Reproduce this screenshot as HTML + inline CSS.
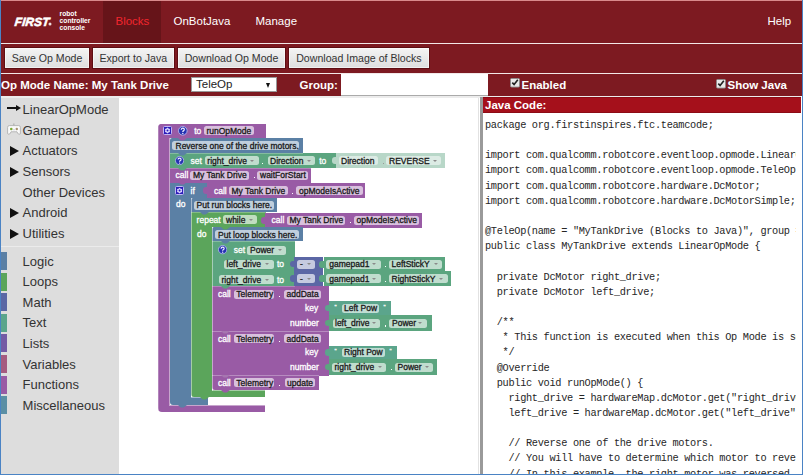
<!DOCTYPE html>
<html><head><meta charset="utf-8">
<style>
*{margin:0;padding:0;box-sizing:border-box}
html,body{width:803px;height:475px;overflow:hidden;background:#fff}
body{position:relative;font-family:"Liberation Sans",sans-serif}
.a{position:absolute}
.hdr{background:#7d1a21}
.nav{position:absolute;top:15px;font-size:11.5px;color:#fff;line-height:13px;white-space:nowrap}
.btn{position:absolute;top:47.4px;height:21.5px;background:linear-gradient(#f4f4f4,#dedede);border:1px solid #5e0e13;box-shadow:inset 0 0 0 1px rgba(255,255,255,.55);font-size:10.6px;color:#333;line-height:21.5px;text-align:center;white-space:nowrap}
.lbl{position:absolute;font-weight:bold;color:#fff;font-size:11.5px;line-height:13px;white-space:nowrap}
.side{position:absolute;left:22.6px;font-size:13px;color:#333;line-height:15px;white-space:nowrap}
.tri{position:absolute;left:10px;width:0;height:0;border-left:9.5px solid #111;border-top:5px solid transparent;border-bottom:5px solid transparent}
.cat{position:absolute;left:1px;width:6px;height:18px}
.code{position:absolute;left:2px;top:4px;font-family:"Liberation Mono",monospace;font-size:10.3px;letter-spacing:-0.32px;line-height:15.15px;color:#262626;white-space:pre}
</style><style>
.bl{position:absolute;height:10px;line-height:10px;white-space:nowrap;font-family:"Liberation Sans",sans-serif;-webkit-text-stroke:0.3px currentColor}
.q{background:#2628b4;border-radius:50%;color:#e8e0ff;text-align:center;font-weight:bold;border:0.9px solid #b9b0f0}
.g{background:#2a1cb8;border:0.9px solid #c0b5f5;border-radius:1.5px}
.g svg{display:block}
</style>
</head><body>
<!-- frame -->
<div class="a hdr" style="left:0;top:0;width:803px;height:96px"></div>
<div class="a" style="left:0;top:0;width:803px;height:1px;background:#d98a8c"></div>
<!-- blocks tab -->
<div class="a" style="left:103px;top:1px;width:58px;height:42px;background:#661419"></div>
<div class="a" style="left:0;top:43px;width:803px;height:1px;background:#f3e8e8"></div>
<div class="a" style="left:0;top:73px;width:803px;height:1px;background:#f3e8e8"></div>

<!-- logo -->
<div class="a" style="left:14px;top:15.2px;font-size:11.9px;line-height:14px;font-weight:bold;font-style:italic;color:#fff;letter-spacing:0.1px;-webkit-text-stroke:0.55px #fff;transform:skewX(-6deg);transform-origin:0 100%">FIRST</div><svg class="a" style="left:48.2px;top:21.8px" width="4" height="4" viewBox="0 0 4 4"><circle cx="2" cy="2" r="1.5" fill="#fff" fill-opacity="0.85"/></svg>
<div class="a" style="left:59.6px;top:10.3px;font-size:6.7px;font-weight:bold;color:#fff;line-height:7.1px">robot<br>controller<br>console</div>

<div class="nav" style="left:115.5px;color:#f2262e">Blocks</div>
<div class="nav" style="left:173.5px">OnBotJava</div>
<div class="nav" style="left:255.5px">Manage</div>
<div class="nav" style="left:767.5px">Help</div>

<div class="btn" style="left:3.6px;width:86.8px">Save Op Mode</div>
<div class="btn" style="left:91.6px;width:83.4px">Export to Java</div>
<div class="btn" style="left:176.7px;width:109.7px">Download Op Mode</div>
<div class="btn" style="left:287.7px;width:142.5px">Download Image of Blocks</div>

<div class="lbl" style="left:1px;top:79px">Op Mode Name: My Tank Drive</div>
<div class="a" style="left:191.3px;top:76.8px;width:85.5px;height:15.3px;background:#fff;border:1px solid #999"></div>
<div class="a" style="left:196px;top:78px;font-size:11.5px;color:#222;line-height:13px">TeleOp</div>
<div class="a" style="left:265.5px;top:82.5px;width:0;height:0;border-top:5px solid #111;border-left:2.5px solid transparent;border-right:2.5px solid transparent"></div>
<div class="lbl" style="left:299.5px;top:79px">Group:</div>
<div class="a" style="left:341px;top:74px;width:147px;height:22px;background:#fff;border-bottom:1px solid #aaa"></div>

<svg class="a" style="left:510px;top:78px" width="10" height="10" viewBox="0 0 10 10"><rect x="0.5" y="0.5" width="9" height="8.6" rx="1" fill="#e9e9e9" stroke="#8a8a8a" stroke-width="0.9"/><path d="M2.3 4.6 L4.1 6.6 L7.8 1.8" fill="none" stroke="#222" stroke-width="1.6"/></svg>
<div class="lbl" style="left:521.5px;top:79px">Enabled</div>
<svg class="a" style="left:716px;top:78.7px" width="10" height="10" viewBox="0 0 10 10"><rect x="0.5" y="0.5" width="9" height="8.6" rx="1" fill="#e9e9e9" stroke="#8a8a8a" stroke-width="0.9"/><path d="M2.3 4.6 L4.1 6.6 L7.8 1.8" fill="none" stroke="#222" stroke-width="1.6"/></svg>
<div class="lbl" style="left:727.5px;top:79px">Show Java</div>

<!-- content -->
<div class="a" style="left:0;top:96px;width:803px;height:2px;background:#ececec"></div>
<div class="a" style="left:1px;top:98px;width:118px;height:377px;background:#dddddd"></div>
<div class="a" style="left:1px;top:246px;width:118px;height:1px;background:#ebebeb"></div>

<div class="a" style="left:7px;top:107.2px;width:11px;height:1.6px;background:#111"></div>
<div class="a" style="left:15.5px;top:105px;width:0;height:0;border-left:5px solid #111;border-top:3px solid transparent;border-bottom:3px solid transparent"></div>
<svg class="a" style="left:7px;top:122.5px" width="14" height="12" viewBox="0 0 14 12"><rect x="6" y="0.5" width="1.6" height="2.5" fill="#b8b8b8"/><path d="M2.2 2.6 H11.8 Q13.4 2.6 13.4 4.4 V10 Q13.4 11.3 12.2 11.3 Q11.2 11.3 10.6 10 L10 8.8 H4 L3.4 10 Q2.8 11.3 1.8 11.3 Q0.6 11.3 0.6 10 V4.4 Q0.6 2.6 2.2 2.6 Z" fill="#fafafa" stroke="#b0b0b0" stroke-width="0.9"/><circle cx="4.3" cy="6" r="1.3" fill="#7aa832"/><circle cx="9.8" cy="6" r="1.2" fill="#a89070"/><circle cx="7" cy="6.8" r="0.8" fill="#c8c8e0"/></svg>
<div class="side" style="top:102.00px">LinearOpMode</div>
<div class="side" style="top:122.65px">Gamepad</div>
<div class="tri" style="top:146.10px"></div>
<div class="side" style="top:143.30px">Actuators</div>
<div class="tri" style="top:166.75px"></div>
<div class="side" style="top:163.95px">Sensors</div>
<div class="side" style="top:184.60px">Other Devices</div>
<div class="tri" style="top:208.05px"></div>
<div class="side" style="top:205.25px">Android</div>
<div class="tri" style="top:228.70px"></div>
<div class="side" style="top:225.90px">Utilities</div>
<div class="cat" style="top:252.00px;background:#5b80a5"></div><div class="side" style="top:253.60px">Logic</div>
<div class="cat" style="top:272.60px;background:#5ba55b"></div><div class="side" style="top:274.20px">Loops</div>
<div class="cat" style="top:293.20px;background:#5b67a5"></div><div class="side" style="top:294.80px">Math</div>
<div class="cat" style="top:313.80px;background:#5ba58c"></div><div class="side" style="top:315.40px">Text</div>
<div class="cat" style="top:334.40px;background:#745ba5"></div><div class="side" style="top:336.00px">Lists</div>
<div class="cat" style="top:355.00px;background:#a55b80"></div><div class="side" style="top:356.60px">Variables</div>
<div class="cat" style="top:375.60px;background:#995ba5"></div><div class="side" style="top:377.20px">Functions</div>
<div class="cat" style="top:396.20px;background:#5b8fa5"></div><div class="side" style="top:397.80px">Miscellaneous</div>

<!-- blocks -->
<div class="ws">
<div class="a" style="left:157.5px;top:123.5px;width:108.20px;height:14.30px;background:#995ba5;border-radius:4px 0 0 0;"></div>
<div class="a" style="left:157.5px;top:123.5px;width:12.10px;height:288.30px;background:#995ba5;border-radius:4px 0 0 4px;"></div>
<div class="a" style="left:169.6px;top:404.9px;width:95.80px;height:6.90px;background:#995ba5;"></div>
<div class="a" style="left:158.3px;top:125px;width:0.50px;height:285.00px;background:rgba(255,255,255,.25)"></div>
<div class="a g" style="left:163px;top:126.2px;width:9px;height:9px"></div><svg class="a" style="left:163px;top:126.2px" width="9" height="9" viewBox="0 0 9 9"><polygon points="4.50,1.60 5.60,2.59 7.01,3.05 6.70,4.50 7.01,5.95 5.60,6.41 4.50,7.40 3.40,6.41 1.99,5.95 2.30,4.50 1.99,3.05 3.40,2.59" fill="#ddd8ff"/><circle cx="4.5" cy="4.5" r="1.0" fill="#2a1cb8"/></svg>
<svg class="a" style="left:178.3px;top:126.4px" width="9.6" height="9.6" viewBox="0 0 10 10"><circle cx="5" cy="5" r="4.5" fill="#2432b2" stroke="#b4b8f0" stroke-width="0.9"/><path d="M3.4 3.9 Q3.4 2.3 5 2.3 Q6.6 2.3 6.6 3.7 Q6.6 4.6 5.6 5.1 Q5 5.4 5 6.2" fill="none" stroke="#f4f0ff" stroke-width="1.25"/><circle cx="5" cy="7.7" r="0.75" fill="#f4f0ff"/></svg>
<div class="bl" style="left:194.2px;top:125.65px;color:#fff;font-size:8.5px">to</div>
<div class="a" style="left:204px;top:126.30px;width:49.70px;height:9px;background:rgba(255,255,255,.62);border-radius:2.5px"></div>
<div class="bl" style="left:206.4px;top:125.85px;color:#1a1a1a;font-size:8.5px">runOpMode</div>
<div class="a" style="left:169.6px;top:138.2px;width:133.40px;height:14.70px;background:#5b80a5;border-radius:2px 0 0 0;"></div>
<div class="a" style="left:172.2px;top:140.75px;width:126.80px;height:9.5px;background:rgba(255,255,255,.62);border-radius:2.5px"></div>
<div class="bl" style="left:175.5px;top:140.55px;color:#1a1a1a;font-size:8.5px">Reverse one of the drive motors.</div>
<div class="a" style="left:169.6px;top:152.9px;width:166.40px;height:15.10px;background:#5ba57f;"></div>
<svg class="a" style="left:175.2px;top:156.2px" width="9.2" height="9.2" viewBox="0 0 10 10"><circle cx="5" cy="5" r="4.5" fill="#2432b2" stroke="#b4b8f0" stroke-width="0.9"/><path d="M3.4 3.9 Q3.4 2.3 5 2.3 Q6.6 2.3 6.6 3.7 Q6.6 4.6 5.6 5.1 Q5 5.4 5 6.2" fill="none" stroke="#f4f0ff" stroke-width="1.25"/><circle cx="5" cy="7.7" r="0.75" fill="#f4f0ff"/></svg>
<div class="bl" style="left:190.6px;top:155.55px;color:#fff;font-size:8.5px">set</div>
<div class="a" style="left:204.9px;top:156.00px;width:53.80px;height:9px;background:rgba(255,255,255,.62);border-radius:2.5px"></div>
<div class="bl" style="left:207.3px;top:155.55px;color:#1a1a1a;font-size:8.5px">right_drive</div>
<div class="a" style="left:250.20px;top:159.50px;width:0;height:0;border-top:2.5px solid #8a8a8a;border-left:2px solid transparent;border-right:2px solid transparent"></div>
<div class="a" style="left:261.7px;top:162.50px;width:1.2px;height:1.2px;background:#fff"></div>
<div class="a" style="left:267.6px;top:156.00px;width:47.40px;height:9px;background:rgba(255,255,255,.62);border-radius:2.5px"></div>
<div class="bl" style="left:270px;top:155.55px;color:#1a1a1a;font-size:8.5px">Direction</div>
<div class="a" style="left:306.50px;top:159.50px;width:0;height:0;border-top:2.5px solid #8a8a8a;border-left:2px solid transparent;border-right:2px solid transparent"></div>
<div class="bl" style="left:319.2px;top:155.55px;color:#fff;font-size:8.5px">to</div>
<div class="a" style="left:336px;top:153px;width:108.80px;height:14.80px;background:#b8d7c8;"></div>
<div class="a" style="left:331.5px;top:156.95px;width:5.5px;height:7.5px;background:#b8d7c8;border-radius:3px 0 0 3px"></div>
<div class="a" style="left:338.8px;top:156.00px;width:38.90px;height:9px;background:rgba(255,255,255,.5);border-radius:2.5px"></div>
<div class="bl" style="left:341px;top:155.55px;color:#1a1a1a;font-size:8.5px">Direction</div>
<div class="a" style="left:382.7px;top:162.50px;width:1.2px;height:1.2px;background:#999"></div>
<div class="a" style="left:386px;top:156.00px;width:55.00px;height:9px;background:rgba(255,255,255,.5);border-radius:2.5px"></div>
<div class="bl" style="left:389px;top:155.55px;color:#1a1a1a;font-size:8.5px">REVERSE</div>
<div class="a" style="left:432.50px;top:159.50px;width:0;height:0;border-top:2.5px solid #8a8a8a;border-left:2px solid transparent;border-right:2px solid transparent"></div>
<div class="a" style="left:169.6px;top:168px;width:141.40px;height:14.50px;background:#995ba5;"></div>
<div class="bl" style="left:175.6px;top:170.15px;color:#fff;font-size:8.5px">call</div>
<div class="a" style="left:190.4px;top:170.60px;width:58.20px;height:9px;background:rgba(255,255,255,.62);border-radius:2.5px"></div>
<div class="bl" style="left:193px;top:170.15px;color:#1a1a1a;font-size:8.5px">My Tank Drive</div>
<div class="a" style="left:253.6px;top:177.10px;width:1.2px;height:1.2px;background:#fff"></div>
<div class="a" style="left:257.4px;top:170.60px;width:50.60px;height:9px;background:rgba(255,255,255,.62);border-radius:2.5px"></div>
<div class="bl" style="left:260px;top:170.15px;color:#1a1a1a;font-size:8.5px">waitForStart</div>
<div class="a" style="left:169.6px;top:182.5px;width:38.00px;height:15.70px;background:#5b80a5;"></div>
<div class="a" style="left:169.6px;top:182.5px;width:21.40px;height:222.40px;background:#5b80a5;border-radius:0 0 0 3px;"></div>
<div class="a" style="left:191px;top:396.9px;width:16.80px;height:8.00px;background:#5b80a5;"></div>
<div class="a g" style="left:175px;top:186px;width:9.2px;height:9.2px"></div><svg class="a" style="left:175px;top:186px" width="9.2" height="9.2" viewBox="0 0 9 9"><polygon points="4.50,1.60 5.60,2.59 7.01,3.05 6.70,4.50 7.01,5.95 5.60,6.41 4.50,7.40 3.40,6.41 1.99,5.95 2.30,4.50 1.99,3.05 3.40,2.59" fill="#ddd8ff"/><circle cx="4.5" cy="4.5" r="1.0" fill="#2a1cb8"/></svg>
<div class="bl" style="left:190.6px;top:185.65px;color:#fff;font-size:8.5px">if</div>
<div class="bl" style="left:176px;top:198.65px;color:#fff;font-size:8.5px">do</div>
<div class="a" style="left:207.4px;top:182.5px;width:157.60px;height:15.60px;background:#995ba5;"></div>
<div class="a" style="left:202.9px;top:186.80px;width:5.5px;height:7.4px;background:#995ba5;border-radius:3px 0 0 3px"></div>
<div class="bl" style="left:214px;top:185.75px;color:#fff;font-size:8.5px">call</div>
<div class="a" style="left:229px;top:186.20px;width:59.00px;height:9px;background:rgba(255,255,255,.62);border-radius:2.5px"></div>
<div class="bl" style="left:231.5px;top:185.75px;color:#1a1a1a;font-size:8.5px">My Tank Drive</div>
<div class="a" style="left:292.3px;top:192.70px;width:1.2px;height:1.2px;background:#fff"></div>
<div class="a" style="left:296.4px;top:186.20px;width:66.60px;height:9px;background:rgba(255,255,255,.62);border-radius:2.5px"></div>
<div class="bl" style="left:299px;top:185.75px;color:#1a1a1a;font-size:8.5px">opModeIsActive</div>
<div class="a" style="left:191px;top:198.1px;width:86.40px;height:14.30px;background:#5b80a5;border-radius:2px 0 0 0;"></div>
<div class="a" style="left:194px;top:200.55px;width:80.00px;height:9.5px;background:rgba(255,255,255,.62);border-radius:2.5px"></div>
<div class="bl" style="left:196.5px;top:200.35px;color:#1a1a1a;font-size:8.5px">Put run blocks here.</div>
<div class="a" style="left:191px;top:212.2px;width:74.60px;height:15.20px;background:#5ba55b;"></div>
<div class="a" style="left:191px;top:212.2px;width:21.00px;height:184.80px;background:#5ba55b;border-radius:0 0 0 3px;"></div>
<div class="a" style="left:212px;top:390.4px;width:53.40px;height:6.60px;background:#5ba55b;"></div>
<div class="bl" style="left:196.6px;top:214.85px;color:#fff;font-size:8.5px">repeat</div>
<div class="a" style="left:223.3px;top:215.30px;width:34.10px;height:9px;background:rgba(255,255,255,.62);border-radius:2.5px"></div>
<div class="bl" style="left:226px;top:214.85px;color:#1a1a1a;font-size:8.5px">while</div>
<div class="a" style="left:248.90px;top:218.80px;width:0;height:0;border-top:2.5px solid #8a8a8a;border-left:2px solid transparent;border-right:2px solid transparent"></div>
<div class="bl" style="left:197px;top:228.65px;color:#fff;font-size:8.5px">do</div>
<div class="a" style="left:265.4px;top:213.1px;width:157.10px;height:14.50px;background:#995ba5;"></div>
<div class="a" style="left:260.9px;top:216.80px;width:5.5px;height:7px;background:#995ba5;border-radius:3px 0 0 3px"></div>
<div class="bl" style="left:271.6px;top:215.35px;color:#fff;font-size:8.5px">call</div>
<div class="a" style="left:287px;top:215.80px;width:58.40px;height:9px;background:rgba(255,255,255,.62);border-radius:2.5px"></div>
<div class="bl" style="left:289.5px;top:215.35px;color:#1a1a1a;font-size:8.5px">My Tank Drive</div>
<div class="a" style="left:349.8px;top:222.30px;width:1.2px;height:1.2px;background:#fff"></div>
<div class="a" style="left:353.8px;top:215.80px;width:65.20px;height:9px;background:rgba(255,255,255,.62);border-radius:2.5px"></div>
<div class="bl" style="left:356.5px;top:215.35px;color:#1a1a1a;font-size:8.5px">opModeIsActive</div>
<div class="a" style="left:212px;top:227.4px;width:91.00px;height:13.90px;background:#5b80a5;border-radius:2px 0 0 0;"></div>
<div class="a" style="left:215.3px;top:230.10px;width:84.20px;height:9px;background:rgba(255,255,255,.62);border-radius:2.5px"></div>
<div class="bl" style="left:218px;top:229.65px;color:#1a1a1a;font-size:8.5px">Put loop blocks here.</div>
<div class="a" style="left:212px;top:241.3px;width:82.50px;height:44.90px;background:#5ba57f;"></div>
<svg class="a" style="left:217.8px;top:245.4px" width="9.3" height="9.3" viewBox="0 0 10 10"><circle cx="5" cy="5" r="4.5" fill="#2432b2" stroke="#b4b8f0" stroke-width="0.9"/><path d="M3.4 3.9 Q3.4 2.3 5 2.3 Q6.6 2.3 6.6 3.7 Q6.6 4.6 5.6 5.1 Q5 5.4 5 6.2" fill="none" stroke="#f4f0ff" stroke-width="1.25"/><circle cx="5" cy="7.7" r="0.75" fill="#f4f0ff"/></svg>
<div class="bl" style="left:233.7px;top:245.25px;color:#fff;font-size:8.5px">set</div>
<div class="a" style="left:247.4px;top:245.70px;width:38.60px;height:9px;background:rgba(255,255,255,.62);border-radius:2.5px"></div>
<div class="bl" style="left:250px;top:245.25px;color:#1a1a1a;font-size:8.5px">Power</div>
<div class="a" style="left:277.50px;top:249.20px;width:0;height:0;border-top:2.5px solid #8a8a8a;border-left:2px solid transparent;border-right:2px solid transparent"></div>
<div class="a" style="left:224px;top:259.80px;width:49.60px;height:9px;background:rgba(255,255,255,.62);border-radius:2.5px"></div>
<div class="bl" style="left:226.5px;top:259.35px;color:#1a1a1a;font-size:8.5px">left_drive</div>
<div class="a" style="left:265.10px;top:263.30px;width:0;height:0;border-top:2.5px solid #8a8a8a;border-left:2px solid transparent;border-right:2px solid transparent"></div>
<div class="bl" style="left:277px;top:259.35px;color:#fff;font-size:8.5px">to</div>
<div class="a" style="left:219px;top:275.00px;width:54.60px;height:9px;background:rgba(255,255,255,.62);border-radius:2.5px"></div>
<div class="bl" style="left:221.5px;top:274.55px;color:#1a1a1a;font-size:8.5px">right_drive</div>
<div class="a" style="left:265.10px;top:278.50px;width:0;height:0;border-top:2.5px solid #8a8a8a;border-left:2px solid transparent;border-right:2px solid transparent"></div>
<div class="bl" style="left:277px;top:274.55px;color:#fff;font-size:8.5px">to</div>
<div class="a" style="left:294.4px;top:257.2px;width:29.00px;height:14.40px;background:#5b67a5;"></div>
<div class="a" style="left:289.9px;top:260.75px;width:5.5px;height:6.5px;background:#5b67a5;border-radius:3px 0 0 3px"></div>
<div class="a" style="left:297.2px;top:259.90px;width:17.80px;height:9px;background:rgba(255,255,255,.65);border-radius:2.5px"></div>
<div class="bl" style="left:300px;top:259.45px;color:#1a1a1a;font-size:8.5px">-</div>
<div class="a" style="left:306.50px;top:263.40px;width:0;height:0;border-top:2.5px solid #8a8a8a;border-left:2px solid transparent;border-right:2px solid transparent"></div>
<div class="a" style="left:294.4px;top:271.6px;width:29.00px;height:14.40px;background:#5b67a5;"></div>
<div class="a" style="left:289.9px;top:275.15px;width:5.5px;height:6.5px;background:#5b67a5;border-radius:3px 0 0 3px"></div>
<div class="a" style="left:297.2px;top:274.10px;width:17.80px;height:9px;background:rgba(255,255,255,.65);border-radius:2.5px"></div>
<div class="bl" style="left:300px;top:273.65px;color:#1a1a1a;font-size:8.5px">-</div>
<div class="a" style="left:306.50px;top:277.60px;width:0;height:0;border-top:2.5px solid #8a8a8a;border-left:2px solid transparent;border-right:2px solid transparent"></div>
<div class="a" style="left:323.6px;top:257.2px;width:121.80px;height:14.10px;background:#5ba57f;"></div>
<div class="a" style="left:319.1px;top:261.15px;width:5.5px;height:6.5px;background:#5ba57f;border-radius:3px 0 0 3px"></div>
<div class="a" style="left:326.2px;top:259.80px;width:54.70px;height:9px;background:rgba(255,255,255,.62);border-radius:2.5px"></div>
<div class="bl" style="left:329.2px;top:259.35px;color:#1a1a1a;font-size:8.5px">gamepad1</div>
<div class="a" style="left:372.40px;top:263.30px;width:0;height:0;border-top:2.5px solid #8a8a8a;border-left:2px solid transparent;border-right:2px solid transparent"></div>
<div class="a" style="left:385px;top:266.30px;width:1.2px;height:1.2px;background:#fff"></div>
<div class="a" style="left:389px;top:259.80px;width:53.00px;height:9px;background:rgba(255,255,255,.62);border-radius:2.5px"></div>
<div class="bl" style="left:391.5px;top:259.35px;color:#1a1a1a;font-size:8.5px">LeftStickY</div>
<div class="a" style="left:433.50px;top:263.30px;width:0;height:0;border-top:2.5px solid #8a8a8a;border-left:2px solid transparent;border-right:2px solid transparent"></div>
<div class="a" style="left:323.6px;top:271.3px;width:127.20px;height:14.80px;background:#5ba57f;"></div>
<div class="a" style="left:319.1px;top:275.45px;width:5.5px;height:6.5px;background:#5ba57f;border-radius:3px 0 0 3px"></div>
<div class="a" style="left:326.2px;top:274.20px;width:54.70px;height:9px;background:rgba(255,255,255,.62);border-radius:2.5px"></div>
<div class="bl" style="left:329.2px;top:273.75px;color:#1a1a1a;font-size:8.5px">gamepad1</div>
<div class="a" style="left:372.40px;top:277.70px;width:0;height:0;border-top:2.5px solid #8a8a8a;border-left:2px solid transparent;border-right:2px solid transparent"></div>
<div class="a" style="left:385px;top:280.70px;width:1.2px;height:1.2px;background:#fff"></div>
<div class="a" style="left:389px;top:274.20px;width:58.70px;height:9px;background:rgba(255,255,255,.62);border-radius:2.5px"></div>
<div class="bl" style="left:391.5px;top:273.75px;color:#1a1a1a;font-size:8.5px">RightStickY</div>
<div class="a" style="left:439.20px;top:277.70px;width:0;height:0;border-top:2.5px solid #8a8a8a;border-left:2px solid transparent;border-right:2px solid transparent"></div>
<div class="a" style="left:212px;top:286.2px;width:117.00px;height:44.80px;background:#995ba5;"></div>
<div class="bl" style="left:218px;top:289.05px;color:#fff;font-size:8.5px">call</div>
<div class="a" style="left:233.9px;top:289.50px;width:39.80px;height:9px;background:rgba(255,255,255,.62);border-radius:2.5px"></div>
<div class="bl" style="left:236.3px;top:289.05px;color:#1a1a1a;font-size:8.5px">Telemetry</div>
<div class="a" style="left:278.5px;top:296.00px;width:1.2px;height:1.2px;background:#fff"></div>
<div class="a" style="left:284px;top:289.50px;width:37.00px;height:9px;background:rgba(255,255,255,.62);border-radius:2.5px"></div>
<div class="bl" style="left:286.5px;top:289.05px;color:#1a1a1a;font-size:8.5px">addData</div>
<div class="bl" style="left:305px;top:303.25px;color:#fff;font-size:8.5px">key</div>
<div class="bl" style="left:290px;top:318.45px;color:#fff;font-size:8.5px">number</div>
<div class="a" style="left:329.3px;top:301.3px;width:61.50px;height:13.70px;background:#5ba58c;"></div>
<div class="a" style="left:324.8px;top:304.95px;width:5.5px;height:6.5px;background:#5ba58c;border-radius:3px 0 0 3px"></div>
<div class="bl" style="left:334.5px;top:302.12px;color:#fff;font-size:6px">"</div>
<div class="a" style="left:341.5px;top:303.70px;width:37.40px;height:9px;background:rgba(255,255,255,.62);border-radius:2.5px"></div>
<div class="bl" style="left:344px;top:303.25px;color:#1a1a1a;font-size:8.5px">Left Pow</div>
<div class="bl" style="left:383.5px;top:302.12px;color:#fff;font-size:6px">"</div>
<div class="a" style="left:329.3px;top:315.3px;width:102.50px;height:15.30px;background:#5ba57f;"></div>
<div class="a" style="left:324.8px;top:319.95px;width:5.5px;height:6.5px;background:#5ba57f;border-radius:3px 0 0 3px"></div>
<div class="a" style="left:332.5px;top:318.90px;width:47.90px;height:9px;background:rgba(255,255,255,.62);border-radius:2.5px"></div>
<div class="bl" style="left:335px;top:318.45px;color:#1a1a1a;font-size:8.5px">left_drive</div>
<div class="a" style="left:371.90px;top:322.40px;width:0;height:0;border-top:2.5px solid #8a8a8a;border-left:2px solid transparent;border-right:2px solid transparent"></div>
<div class="a" style="left:385px;top:325.40px;width:1.2px;height:1.2px;background:#fff"></div>
<div class="a" style="left:389.3px;top:318.90px;width:37.40px;height:9px;background:rgba(255,255,255,.62);border-radius:2.5px"></div>
<div class="bl" style="left:392px;top:318.45px;color:#1a1a1a;font-size:8.5px">Power</div>
<div class="a" style="left:418.20px;top:322.40px;width:0;height:0;border-top:2.5px solid #8a8a8a;border-left:2px solid transparent;border-right:2px solid transparent"></div>
<div class="a" style="left:212px;top:331px;width:117.00px;height:44.50px;background:#995ba5;"></div>
<div class="bl" style="left:218px;top:333.85px;color:#fff;font-size:8.5px">call</div>
<div class="a" style="left:233.9px;top:334.30px;width:39.80px;height:9px;background:rgba(255,255,255,.62);border-radius:2.5px"></div>
<div class="bl" style="left:236.3px;top:333.85px;color:#1a1a1a;font-size:8.5px">Telemetry</div>
<div class="a" style="left:278.5px;top:340.80px;width:1.2px;height:1.2px;background:#fff"></div>
<div class="a" style="left:284px;top:334.30px;width:37.00px;height:9px;background:rgba(255,255,255,.62);border-radius:2.5px"></div>
<div class="bl" style="left:286.5px;top:333.85px;color:#1a1a1a;font-size:8.5px">addData</div>
<div class="bl" style="left:305px;top:347.45px;color:#fff;font-size:8.5px">key</div>
<div class="bl" style="left:290px;top:362.15px;color:#fff;font-size:8.5px">number</div>
<div class="a" style="left:329.3px;top:345.7px;width:67.50px;height:13.50px;background:#5ba58c;"></div>
<div class="a" style="left:324.8px;top:349.15px;width:5.5px;height:6.5px;background:#5ba58c;border-radius:3px 0 0 3px"></div>
<div class="bl" style="left:334.5px;top:346.32px;color:#fff;font-size:6px">"</div>
<div class="a" style="left:341.5px;top:347.90px;width:43.30px;height:9px;background:rgba(255,255,255,.62);border-radius:2.5px"></div>
<div class="bl" style="left:344px;top:347.45px;color:#1a1a1a;font-size:8.5px">Right Pow</div>
<div class="bl" style="left:389.5px;top:346.32px;color:#fff;font-size:6px">"</div>
<div class="a" style="left:329.3px;top:359.3px;width:107.70px;height:15.40px;background:#5ba57f;"></div>
<div class="a" style="left:324.8px;top:363.85px;width:5.5px;height:6.5px;background:#5ba57f;border-radius:3px 0 0 3px"></div>
<div class="a" style="left:332.2px;top:362.70px;width:54.10px;height:9px;background:rgba(255,255,255,.62);border-radius:2.5px"></div>
<div class="bl" style="left:334.5px;top:362.25px;color:#1a1a1a;font-size:8.5px">right_drive</div>
<div class="a" style="left:377.80px;top:366.20px;width:0;height:0;border-top:2.5px solid #8a8a8a;border-left:2px solid transparent;border-right:2px solid transparent"></div>
<div class="a" style="left:390.5px;top:369.20px;width:1.2px;height:1.2px;background:#fff"></div>
<div class="a" style="left:395px;top:362.70px;width:38.40px;height:9px;background:rgba(255,255,255,.62);border-radius:2.5px"></div>
<div class="bl" style="left:397.5px;top:362.25px;color:#1a1a1a;font-size:8.5px">Power</div>
<div class="a" style="left:424.90px;top:366.20px;width:0;height:0;border-top:2.5px solid #8a8a8a;border-left:2px solid transparent;border-right:2px solid transparent"></div>
<div class="a" style="left:212px;top:375.6px;width:106.50px;height:14.80px;background:#995ba5;border-radius:0 0 0 3px;"></div>
<div class="bl" style="left:218px;top:377.75px;color:#fff;font-size:8.5px">call</div>
<div class="a" style="left:233.9px;top:378.20px;width:39.80px;height:9px;background:rgba(255,255,255,.62);border-radius:2.5px"></div>
<div class="bl" style="left:236.3px;top:377.75px;color:#1a1a1a;font-size:8.5px">Telemetry</div>
<div class="a" style="left:278.5px;top:384.70px;width:1.2px;height:1.2px;background:#fff"></div>
<div class="a" style="left:284.7px;top:378.20px;width:29.90px;height:9px;background:rgba(255,255,255,.62);border-radius:2.5px"></div>
<div class="bl" style="left:287px;top:377.75px;color:#1a1a1a;font-size:8.5px">update</div>
<div class="a" style="left:169.1px;top:138px;width:0.70px;height:267.50px;background:rgba(255,255,255,.45)"></div>
<div class="a" style="left:169.6px;top:404.6px;width:95.80px;height:0.80px;background:rgba(255,255,255,.45)"></div>
<div class="a" style="left:190.5px;top:198.6px;width:0.70px;height:198.80px;background:rgba(255,255,255,.45)"></div>
<div class="a" style="left:191px;top:396.6px;width:16.80px;height:0.70px;background:rgba(255,255,255,.45)"></div>
<div class="a" style="left:211.6px;top:227.4px;width:0.70px;height:163.40px;background:rgba(255,255,255,.45)"></div>
<div class="a" style="left:212px;top:390.1px;width:53.40px;height:0.70px;background:rgba(255,255,255,.45)"></div>
<div class="a" style="left:212px;top:330.6px;width:117.00px;height:0.70px;background:rgba(255,255,255,.3)"></div>
<div class="a" style="left:212px;top:375.2px;width:106.50px;height:0.70px;background:rgba(255,255,255,.3)"></div>
<div class="a" style="left:169.6px;top:152.6px;width:133.40px;height:0.60px;background:rgba(255,255,255,.25)"></div>
<div class="a" style="left:169.6px;top:167.7px;width:141.40px;height:0.60px;background:rgba(255,255,255,.25)"></div>
<div class="a" style="left:191px;top:212px;width:86.00px;height:0.50px;background:rgba(255,255,255,.25)"></div>
<div class="a" style="left:212px;top:241.1px;width:82.50px;height:0.60px;background:rgba(255,255,255,.25)"></div>
<div class="a" style="left:212px;top:285.9px;width:82.50px;height:0.60px;background:rgba(255,255,255,.25)"></div>
<svg class="a" style="left:178.10px;top:137.50px" width="9.0" height="3.1" viewBox="0 0 9.0 3.1"><polygon points="0,0 9.0,0 5.78,2.6 2.72,2.6" fill="#995ba5"/></svg>
<svg class="a" style="left:178.10px;top:152.60px" width="9.0" height="3.1" viewBox="0 0 9.0 3.1"><polygon points="0,0 9.0,0 5.78,2.6 2.72,2.6" fill="#5b80a5"/></svg>
<svg class="a" style="left:178.10px;top:167.70px" width="9.0" height="3.1" viewBox="0 0 9.0 3.1"><polygon points="0,0 9.0,0 5.78,2.6 2.72,2.6" fill="#5ba57f"/></svg>
<svg class="a" style="left:178.10px;top:182.20px" width="9.0" height="3.1" viewBox="0 0 9.0 3.1"><polygon points="0,0 9.0,0 5.78,2.6 2.72,2.6" fill="#995ba5"/></svg>
<svg class="a" style="left:199.50px;top:197.80px" width="9.0" height="3.1" viewBox="0 0 9.0 3.1"><polygon points="0,0 9.0,0 5.78,2.6 2.72,2.6" fill="#5b80a5"/></svg>
<svg class="a" style="left:199.50px;top:211.90px" width="9.0" height="3.1" viewBox="0 0 9.0 3.1"><polygon points="0,0 9.0,0 5.78,2.6 2.72,2.6" fill="#5b80a5"/></svg>
<svg class="a" style="left:220.50px;top:227.10px" width="9.0" height="3.1" viewBox="0 0 9.0 3.1"><polygon points="0,0 9.0,0 5.78,2.6 2.72,2.6" fill="#5ba55b"/></svg>
<svg class="a" style="left:220.50px;top:241.00px" width="9.0" height="3.1" viewBox="0 0 9.0 3.1"><polygon points="0,0 9.0,0 5.78,2.6 2.72,2.6" fill="#5b80a5"/></svg>
<svg class="a" style="left:220.50px;top:285.90px" width="9.0" height="3.1" viewBox="0 0 9.0 3.1"><polygon points="0,0 9.0,0 5.78,2.6 2.72,2.6" fill="#5ba57f"/></svg>
<svg class="a" style="left:220.50px;top:330.70px" width="9.0" height="3.1" viewBox="0 0 9.0 3.1"><polygon points="0,0 9.0,0 5.78,2.6 2.72,2.6" fill="#a676b0"/></svg>
<svg class="a" style="left:220.50px;top:375.30px" width="9.0" height="3.1" viewBox="0 0 9.0 3.1"><polygon points="0,0 9.0,0 5.78,2.6 2.72,2.6" fill="#a676b0"/></svg>
<svg class="a" style="left:220.50px;top:390.10px" width="9.0" height="3.1" viewBox="0 0 9.0 3.1"><polygon points="0,0 9.0,0 5.78,2.6 2.72,2.6" fill="#995ba5"/></svg>
<svg class="a" style="left:199.50px;top:396.70px" width="9.0" height="3.1" viewBox="0 0 9.0 3.1"><polygon points="0,0 9.0,0 5.78,2.6 2.72,2.6" fill="#5ba55b"/></svg>
<svg class="a" style="left:178.10px;top:404.60px" width="9.0" height="3.1" viewBox="0 0 9.0 3.1"><polygon points="0,0 9.0,0 5.78,2.6 2.72,2.6" fill="#5b80a5"/></svg>
</div>
<!-- code panel -->
<div class="a" style="left:478px;top:98px;width:1px;height:377px;background:#e2e2e2"></div>
<div class="a" style="left:479.8px;top:97.4px;width:3px;height:377px;background:#9a9a9a"></div>
<div class="a" style="left:482.8px;top:97.3px;width:318px;height:15.6px;background:#a5101b;border-top:1px solid #8c0c16;border-bottom:1px solid #8c0c16"></div>
<div class="lbl" style="left:485px;top:99px">Java Code:</div>
<div class="a" style="left:483px;top:114px;width:313px;height:360px;overflow:hidden"><div class="code">package org.firstinspires.ftc.teamcode;

import com.qualcomm.robotcore.eventloop.opmode.LinearOpMode;
import com.qualcomm.robotcore.eventloop.opmode.TeleOp;
import com.qualcomm.robotcore.hardware.DcMotor;
import com.qualcomm.robotcore.hardware.DcMotorSimple;

@TeleOp(name = "MyTankDrive (Blocks to Java)", group = "");
public class MyTankDrive extends LinearOpMode {

  private DcMotor right_drive;
  private DcMotor left_drive;

  /**
   * This function is executed when this Op Mode is selected.
   */
  @Override
  public void runOpMode() {
    right_drive = hardwareMap.dcMotor.get("right_drive");
    left_drive = hardwareMap.dcMotor.get("left_drive");

    // Reverse one of the drive motors.
    // You will have to determine which motor to reverse for your robot.
    // In this example, the right motor was reversed so that positive
</div></div>
<div class="a" style="left:801px;top:96px;width:2px;height:379px;background:#fff"></div>

<!-- window border -->
<div class="a" style="left:0;top:0;width:1px;height:475px;background:#4a83c4"></div>
<div class="a" style="left:802px;top:0;width:1px;height:475px;background:#4a83c4"></div>
<div class="a" style="left:0;top:474px;width:803px;height:1px;background:#4a83c4"></div>
</body></html>
